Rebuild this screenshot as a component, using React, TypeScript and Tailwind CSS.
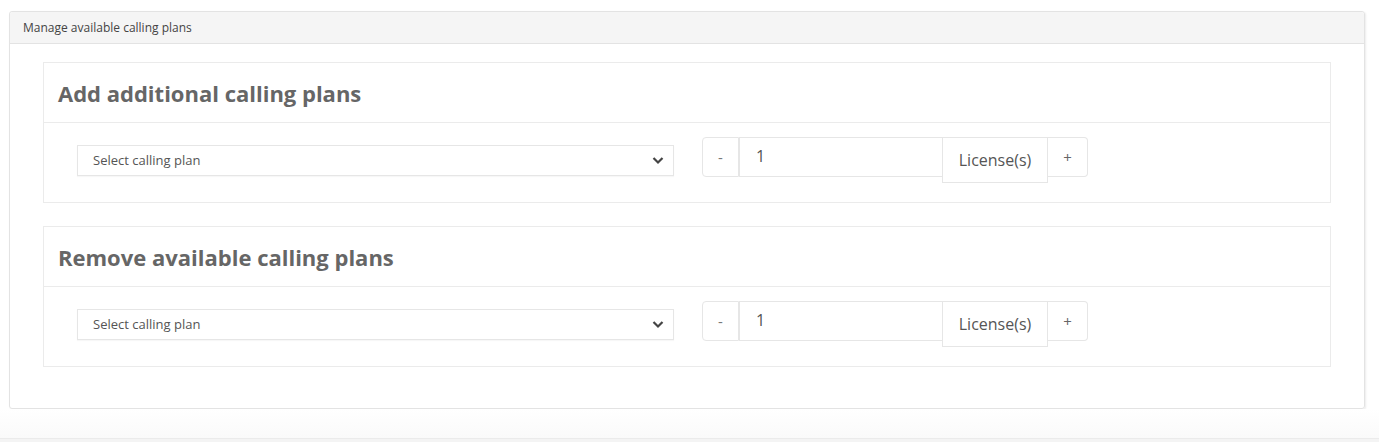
import React from "react";

const PlanRow: React.FC<{ title: string }> = ({ title }) => {
  return (
    <div className="border border-[#ebebeb] bg-white">
      <div className="h-[60px] flex items-center pl-[14px] border-b border-[#ebebeb]">
        <h2 className="text-[22px] font-bold text-[#666] leading-none">{title}</h2>
      </div>
      <div className="h-[79px] flex items-start pl-[33px] pt-[14px]">
        <div className="relative mt-[8px] w-[597px] h-[31px] border border-[#e6e6e6] shadow-[0_1px_1px_rgba(0,0,0,0.03)]">
          <select className="appearance-none w-full h-full pl-[15px] pr-8 text-[13px] text-[#555] bg-white outline-none">
            <option>Select calling plan</option>
          </select>
          <svg
            className="absolute right-[9px] top-[10px] pointer-events-none"
            width="12"
            height="9"
            viewBox="0 0 12 9"
          >
            <path d="M1.5 2 L6 6.5 L10.5 2" fill="none" stroke="#444" strokeWidth="2.2" />
          </svg>
        </div>
        <div className="ml-[28px] flex items-start">
          <button className="w-[37px] h-[40px] border border-[#e6e6e6] rounded-l-[4px] bg-white text-[#777] text-[15px]">
            -
          </button>
          <input
            readOnly
            value="1"
            className="w-[203px] h-[40px] border-y border-l border-[#e6e6e6] pl-[16px] pb-[3px] text-[16px] text-[#555] outline-none"
          />
          <span className="w-[106px] h-[46px] flex items-center justify-center border border-[#e6e6e6] bg-white text-[16px] text-[#555]">
            License(s)
          </span>
          <button className="w-[40px] h-[40px] border-y border-r border-[#e6e6e6] rounded-r-[4px] bg-white text-[#666] text-[15px]">
            +
          </button>
        </div>
      </div>
    </div>
  );
};

const App: React.FC = () => {
  return (
    <div
      className="w-[1379px] h-[442px] bg-white flex flex-col"
      style={{ fontFamily: '"Open Sans", "Liberation Sans", sans-serif' }}
    >
      <div className="ml-[9px] mt-[11px] w-[1356px] h-[398px] border border-[#e3e3e3] rounded-[3px] shadow-[1px_1px_2px_rgba(0,0,0,0.08)] flex flex-col">
        <div className="h-[32px] bg-[#f5f5f5] border-b border-[#e3e3e3] flex items-center pl-[13px] rounded-t-[3px]">
          <span className="text-[12px] text-[#444]">Manage available calling plans</span>
        </div>
        <div className="px-[33px] pt-[18px] flex flex-col gap-[23px]">
          <PlanRow title="Add additional calling plans" />
          <PlanRow title="Remove available calling plans" />
        </div>
      </div>
      <div className="flex-1 bg-gradient-to-b from-white to-[#fafafa]" />
      <div className="h-[4px] bg-[#f4f4f4] border-t border-[#ebebeb]" />
    </div>
  );
};

export default App;
